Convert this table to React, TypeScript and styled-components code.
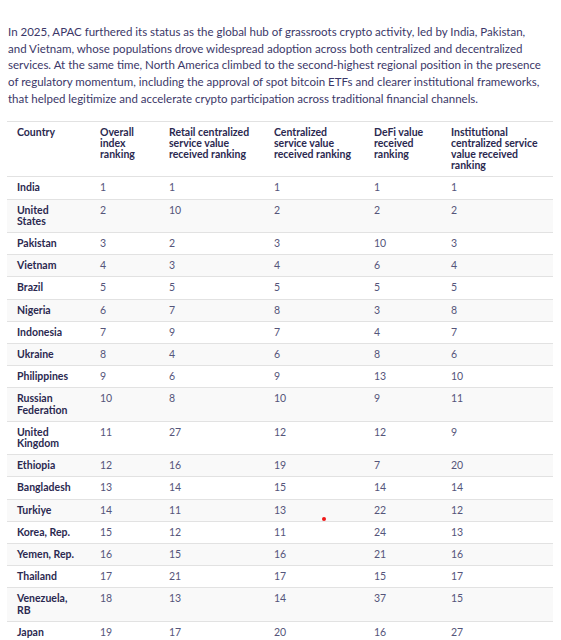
import styled, { createGlobalStyle } from "styled-components";

const GlobalStyle = createGlobalStyle`
  body {
    margin: 0;
    background: #ffffff;
    font-family: Lato, "Noto Sans", sans-serif;
  }
`;

const Page = styled.div`
  position: relative;
  padding: 0 8px;
  overflow: hidden;
  height: 640px;
`;

// only the bottom of the heading is left in view at the top of the page
const HeadingClip = styled.div`
  height: 7px;
  overflow: hidden;
  display: flex;
  align-items: flex-end;
  justify-content: center;
`;

const Heading = styled.h2`
  margin: 0 0 8px;
  flex-shrink: 0;
  font-size: 28px;
  line-height: 30px;
  font-weight: 700;
  color: #1f2a6b;
  white-space: nowrap;
`;

const Lead = styled.p`
  margin: 17px 0 13px;
  font-size: 11.5px;
  line-height: 16.7px;
  color: #3b3768;
`;

const LeadLine = styled.span`
  display: block;
  white-space: nowrap;
`;

const Table = styled.table`
  width: 546px;
  margin-left: -1px;
  table-layout: fixed;
  border-collapse: collapse;
  font-size: 10.5px;
  line-height: 11.2px;
  border-top: 1px solid #e2e2e2;
`;

const HeadCell = styled.th`
  padding: 5px 10px;
  text-align: left;
  vertical-align: top;
  font-weight: 700;
  color: #2b2950;
  border-bottom: 1px solid #e2e2e2;
`;

const Row = styled.tr<{ $shaded: boolean }>`
  background: ${(p) => (p.$shaded ? "#f9f9f9" : "#ffffff")};
`;

const Cell = styled.td<{ $name?: boolean }>`
  padding: 5px ${(p) => (p.$name ? "15px" : "10px")} 5px 10px;
  vertical-align: top;
  border-bottom: 1px solid #e2e2e2;
  font-weight: ${(p) => (p.$name ? 700 : 400)};
  color: ${(p) => (p.$name ? "#2b2950" : "#55557a")};
`;

const Dot = styled.span`
  position: absolute;
  left: 322px;
  top: 517px;
  width: 4px;
  height: 4px;
  border-radius: 50%;
  background: #f01818;
`;

const widths = [83, 69, 105, 100, 77, 112];

const headers = [
  "Country",
  "Overall index ranking",
  "Retail centralized service value received ranking",
  "Centralized service value received ranking",
  "DeFi value received ranking",
  "Institutional centralized service value received ranking",
];

const lead = [
  "In 2025, APAC furthered its status as the global hub of grassroots crypto activity, led by India, Pakistan,",
  "and Vietnam, whose populations drove widespread adoption across both centralized and decentralized",
  "services. At the same time, North America climbed to the second-highest regional position in the presence",
  "of regulatory momentum, including the approval of spot bitcoin ETFs and clearer institutional frameworks,",
  "that helped legitimize and accelerate crypto participation across traditional financial channels.",
];

const rows: [string, number, number, number, number, number][] = [
  ["India", 1, 1, 1, 1, 1],
  ["United States", 2, 10, 2, 2, 2],
  ["Pakistan", 3, 2, 3, 10, 3],
  ["Vietnam", 4, 3, 4, 6, 4],
  ["Brazil", 5, 5, 5, 5, 5],
  ["Nigeria", 6, 7, 8, 3, 8],
  ["Indonesia", 7, 9, 7, 4, 7],
  ["Ukraine", 8, 4, 6, 8, 6],
  ["Philippines", 9, 6, 9, 13, 10],
  ["Russian Federation", 10, 8, 10, 9, 11],
  ["United Kingdom", 11, 27, 12, 12, 9],
  ["Ethiopia", 12, 16, 19, 7, 20],
  ["Bangladesh", 13, 14, 15, 14, 14],
  ["Turkiye", 14, 11, 13, 22, 12],
  ["Korea, Rep.", 15, 12, 11, 24, 13],
  ["Yemen, Rep.", 16, 15, 16, 21, 16],
  ["Thailand", 17, 21, 17, 15, 17],
  ["Venezuela, RB", 18, 13, 14, 37, 15],
  ["Japan", 19, 17, 20, 16, 27],
  ["Cambodia", 20, 18, 18, 20, 18],
];

export default function App() {
  return (
    <Page>
      <GlobalStyle />
      <HeadingClip>
        <Heading>Global crypto adoption index top 20</Heading>
      </HeadingClip>
      <Lead>
        {lead.map((l) => (
          <LeadLine key={l}>{l}</LeadLine>
        ))}
      </Lead>
      <Table>
        <colgroup>
          {widths.map((w, i) => (
            <col key={i} style={{ width: w }} />
          ))}
        </colgroup>
        <thead>
          <tr>
            {headers.map((h) => (
              <HeadCell key={h}>{h}</HeadCell>
            ))}
          </tr>
        </thead>
        <tbody>
          {rows.map((r, i) => (
            <Row key={r[0]} $shaded={i % 2 === 1}>
              <Cell $name>{r[0]}</Cell>
              {r.slice(1).map((v, j) => (
                <Cell key={j}>{v}</Cell>
              ))}
            </Row>
          ))}
        </tbody>
      </Table>
      <Dot />
    </Page>
  );
}
